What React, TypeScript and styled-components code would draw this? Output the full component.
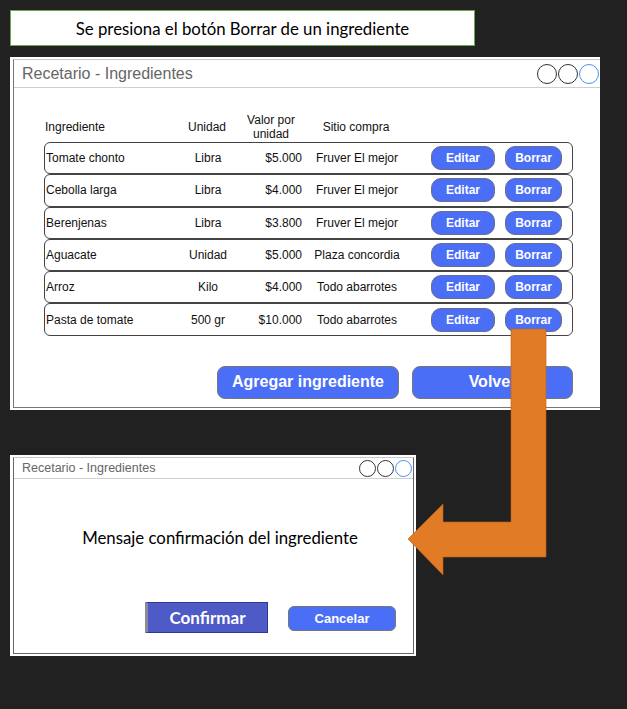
import React from "react";
import styled, { createGlobalStyle } from "styled-components";

const GlobalStyle = createGlobalStyle`
  body {
    margin: 0;
    background: #212121;
    font-family: "Liberation Sans", Arial, sans-serif;
  }
`;

const rows = [
  { name: "Tomate chonto", unit: "Libra", price: "$5.000", shop: "Fruver El mejor" },
  { name: "Cebolla larga", unit: "Libra", price: "$4.000", shop: "Fruver El mejor" },
  { name: "Berenjenas", unit: "Libra", price: "$3.800", shop: "Fruver El mejor" },
  { name: "Aguacate", unit: "Unidad", price: "$5.000", shop: "Plaza concordia" },
  { name: "Arroz", unit: "Kilo", price: "$4.000", shop: "Todo abarrotes" },
  { name: "Pasta de tomate", unit: "500 gr", price: "$10.000", shop: "Todo abarrotes" },
];

function WindowDots({ size }: { size: number }) {
  return (
    <Dots>
      <Dot $size={size} />
      <Dot $size={size} />
      <Dot $size={size} $active />
    </Dots>
  );
}

export default function App() {
  return (
    <Page>
      <GlobalStyle />
      <Caption>Se presiona el botón Borrar de un ingrediente</Caption>

      <MainWindow>
        <Frame>
          <TitleBar $h={28}>
            <Title $size={16}>Recetario - Ingredientes</Title>
            <WindowDots size={20} />
          </TitleBar>
          <Body>
            <Table>
              <HeaderRow>
                <HeadCell>Ingrediente</HeadCell>
                <HeadCell $center>Unidad</HeadCell>
                <HeadCell $center>
                  Valor por
                  <br />
                  unidad
                </HeadCell>
                <HeadCell $center>Sitio compra</HeadCell>
              </HeaderRow>
              {rows.map((r) => (
                <Row key={r.name}>
                  <Cell>{r.name}</Cell>
                  <Cell $align="center">{r.unit}</Cell>
                  <Cell $align="right">{r.price}</Cell>
                  <Cell $align="center">{r.shop}</Cell>
                  <span />
                  <SmallButton>Editar</SmallButton>
                  <SmallButton>Borrar</SmallButton>
                </Row>
              ))}
            </Table>
            <Actions>
              <BigButton $w={182}>Agregar ingrediente</BigButton>
              <BigButton $w={161}>Volver</BigButton>
            </Actions>
          </Body>
        </Frame>
      </MainWindow>

      <Dialog>
        <DialogFrame>
          <TitleBar $h={21}>
            <Title $size={12.5}>Recetario - Ingredientes</Title>
            <WindowDots size={17} />
          </TitleBar>
          <Message>Mensaje confirmación del ingrediente</Message>
          <DialogActions>
            <ConfirmButton>Confirmar</ConfirmButton>
            <CancelButton>Cancelar</CancelButton>
          </DialogActions>
        </DialogFrame>
      </Dialog>

      <Arrow width="627" height="709" viewBox="0 0 627 709">
        <polygon
          points="511,329 546,329 546,557 443,557 443,575 408,539 443,504 443,522 511,522"
          fill="#e17b26"
          stroke="#b8621c"
          strokeWidth="0.6"
        />
      </Arrow>
    </Page>
  );
}

const Page = styled.div`
  position: relative;
  min-height: 709px;
  padding: 10px 0 0 10px;
  box-sizing: border-box;
  overflow: hidden;
`;

const Caption = styled.div`
  width: 465px;
  height: 36px;
  box-sizing: border-box;
  background: #fff;
  border: 1px solid #6aa84f;
  display: flex;
  align-items: center;
  justify-content: center;
  font-family: Lato, "Open Sans", sans-serif;
  font-size: 16.8px;
  color: #000;
`;

const MainWindow = styled.div`
  margin-top: 11px;
  width: 590px;
  height: 353px;
  box-sizing: border-box;
  background: #fff;
  padding: 2px 0 2px 3px;
`;

const Frame = styled.div`
  height: 100%;
  box-sizing: border-box;
  border: 1.5px solid #777;
  border-top-color: #c8c8c8;
  border-right: none;
  display: flex;
  flex-direction: column;
`;

const TitleBar = styled.div<{ $h: number }>`
  height: ${(p) => p.$h}px;
  flex: none;
  box-sizing: border-box;
  border-bottom: 1px solid #cfcfcf;
  display: flex;
  align-items: center;
  justify-content: space-between;
  padding: 0 1px 0 8px;
`;

const Title = styled.span<{ $size: number }>`
  font-size: ${(p) => p.$size}px;
  color: #666;
`;

const Dots = styled.div`
  display: flex;
`;

const Dot = styled.span<{ $size: number; $active?: boolean }>`
  width: ${(p) => p.$size}px;
  height: ${(p) => p.$size}px;
  box-sizing: border-box;
  border-radius: 50%;
  border: 1.3px solid ${(p) => (p.$active ? "#4d8ef5" : "#333")};
  margin-left: 1px;
`;

const Body = styled.div`
  flex: 1;
  display: flex;
  flex-direction: column;
  padding: 24px 27px 0 30px;
`;

const Table = styled.div`
  display: flex;
  flex-direction: column;
`;

const HeaderRow = styled.div`
  display: grid;
  grid-template-columns: 128px 68px 60px 110px;
  align-items: center;
  height: 30px;
  padding-left: 1px;
  font-size: 12px;
  line-height: 14px;
  color: #111;
`;

const HeadCell = styled.div<{ $center?: boolean }>`
  text-align: ${(p) => (p.$center ? "center" : "left")};
`;

const Row = styled.div`
  display: grid;
  grid-template-columns: 128px 68px 60px 110px 19px 64px 57px;
  column-gap: 0;
  align-items: center;
  height: 32.3px;
  box-sizing: border-box;
  padding-left: 1px;
  border: 1.3px solid #444;
  border-radius: 6px;
  font-size: 12px;
  color: #111;

  & > :last-child {
    margin-left: 10px;
    width: 57px;
  }
`;

const Cell = styled.div<{ $align?: "left" | "center" | "right" }>`
  text-align: ${(p) => p.$align || "left"};
  white-space: nowrap;
`;

const blue = "#4b6ef6";

const SmallButton = styled.button`
  height: 24px;
  padding: 0;
  border: 1px solid #6b6b8a;
  border-radius: 10px;
  background: ${blue};
  color: #fff;
  font-family: "Liberation Sans", Arial, sans-serif;
  font-weight: bold;
  font-size: 12px;
`;

const Actions = styled.div`
  display: flex;
  justify-content: flex-end;
  gap: 13px;
  margin-top: 30px;
`;

const BigButton = styled.button<{ $w: number }>`
  width: ${(p) => p.$w}px;
  height: 33px;
  padding: 0;
  border: 1px solid #777;
  border-radius: 8px;
  background: ${blue};
  color: #fff;
  font-family: "Liberation Sans", Arial, sans-serif;
  font-weight: bold;
  font-size: 16px;
`;

const Dialog = styled.div`
  margin-top: 45px;
  width: 406px;
  height: 201px;
  box-sizing: border-box;
  background: #fff;
  padding: 2px 2px 2px 3px;
`;

const DialogFrame = styled.div`
  height: 100%;
  box-sizing: border-box;
  border: 1.3px solid #666;
  border-top-color: #c8c8c8;
  display: flex;
  flex-direction: column;
`;

const Message = styled.div`
  margin-top: 48px;
  padding-left: 13px;
  text-align: center;
  font-family: Lato, "Open Sans", sans-serif;
  font-size: 16.8px;
  color: #000;
`;

const DialogActions = styled.div`
  display: flex;
  align-items: flex-start;
  gap: 20px;
  margin-top: 54px;
  padding-left: 131px;
`;

const ConfirmButton = styled.button`
  width: 123px;
  height: 31px;
  padding: 0;
  border: 1px solid #2e3a8c;
  border-left: 3px solid #8a8a9a;
  background: #4e5bc6;
  color: #fff;
  font-family: Lato, "Open Sans", sans-serif;
  font-weight: bold;
  font-size: 17px;
`;

const CancelButton = styled.button`
  margin-top: 4px;
  width: 108px;
  height: 25px;
  padding: 0;
  border: 1px solid #777;
  border-radius: 6px;
  background: ${blue};
  color: #fff;
  font-family: "Liberation Sans", Arial, sans-serif;
  font-weight: bold;
  font-size: 13px;
`;

const Arrow = styled.svg`
  position: absolute;
  left: 0;
  top: 0;
  pointer-events: none;
`;
